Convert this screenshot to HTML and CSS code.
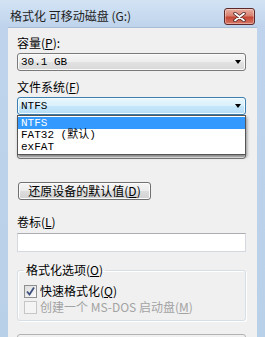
FILE: index.html
```html
<!DOCTYPE html>
<html lang="zh-CN">
<head>
  <meta charset="UTF-8" />
  <title>格式化 可移动磁盘 (G:)</title>
  <link rel="stylesheet" href="styles.css">
</head>
<body>

  <div class="window">
    <div class="titlebar">
      <span class="title">格式化 可移动磁盘 (G:)</span>
      <span class="close">
        <svg width="13" height="10" viewBox="0 0 13 10">
          <path d="M2 1.5 L11 8.5 M11 1.5 L2 8.5" stroke="#4a2020" stroke-width="3.4" stroke-linecap="round"/>
          <path d="M2 1.5 L11 8.5 M11 1.5 L2 8.5" stroke="#fff" stroke-width="1.8" stroke-linecap="round"/>
        </svg>
      </span>
    </div>

    <div class="client">
      <div class="label">容量(<u>P</u>):</div>
      <div class="combo"><span class="lat">30.1 GB</span><i class="arrow"></i></div>

      <div class="label">文件系统(<u>F</u>)</div>
      <div class="drop">
        <div class="combo focus"><span class="lat">NTFS</span><i class="arrow"></i></div>
        <ul class="list">
          <li class="sel">NTFS</li>
          <li>FAT32 (默认)</li>
          <li>exFAT</li>
        </ul>
      </div>

      <!-- covered by the open list -->
      <div class="label covered">分配单元大小(<u>A</u>)</div>
      <div class="combo"><span class="lat covered">4096 字节</span><i class="arrow"></i></div>

      <button class="btn">还原设备的默认值(<u>D</u>)</button>

      <div class="label volume">卷标(<u>L</u>)</div>
      <div class="field"></div>

      <fieldset class="group">
        <legend>格式化选项(<u>O</u>)</legend>
        <div class="check">
          <span class="box">
            <svg width="11" height="11" viewBox="0 0 11 11">
              <path d="M2 5.5 L4.5 8.5 L9 1.5" fill="none" stroke="#3b4f7c" stroke-width="1.8"/>
            </svg>
          </span>
          快速格式化(<u>Q</u>)
        </div>
        <div class="check off">
          <span class="box"></span>
          创建一个 MS-DOS 启动盘(<u>M</u>)
        </div>
      </fieldset>

      <div class="progress"></div>
    </div>
  </div>

</body>
</html>
```

FILE: styles.css
```css
* {
  box-sizing: border-box;
  margin: 0;
  padding: 0;
}

body {
  background: #bcd2ea;
  font-family: "Noto Sans CJK SC", sans-serif;
  font-size: 12px;
  color: #000;
}

u {
  text-decoration: underline;
}

.window {
  width: 265px;
  height: 337px;
  overflow: hidden;
  padding: 0 8px;
  background: linear-gradient(#d3e3f4, #bfd4ec 26px, #b9d0e9);
}

.titlebar {
  height: 27px;
  display: flex;
  align-items: flex-start;
  justify-content: space-between;
  padding-top: 8px;
}

.title {
  padding-left: 2px;
  line-height: 16px;
  color: #222;
}

.close {
  width: 31px;
  height: 17px;
  margin-right: 2px;
  border: 1px solid #5c2828;
  border-radius: 3px;
  background: linear-gradient(#eab0a2, #d8806f 45%, #c54634 55%, #d77866);
  box-shadow: inset 0 0 0 1px rgba(255,255,255,0.35);
  display: flex;
  align-items: center;
  justify-content: center;
}

.client {
  height: 310px;
  background: #f0f0f0;
  border-top: 1px solid #a9bdd4;
  padding: 7px 11px 0 9px;
}

.label {
  line-height: 16px;
  margin-bottom: 2px;
}

.combo + .label,
.drop + .label {
  margin-top: 8px;
}

.covered {
  visibility: hidden;
}

.lat {
  font-family: "Liberation Mono", "Noto Sans CJK SC", monospace;
  font-size: 11px;
}

.combo {
  height: 18px;
  display: flex;
  align-items: center;
  padding: 0 4px 0 3px;
  border: 1px solid #7a7a7a;
  border-radius: 3px;
  background: linear-gradient(#f6f6f6, #ededed 50%, #e2e2e2 50%, #d8d8d8);
  box-shadow: inset 0 0 0 1px #fafafa;
}

.combo.focus {
  border-color: #3c7fb1;
  background: linear-gradient(#eaf6fd, #d9f0fc 50%, #c6e7fb 50%, #b5ddf6);
  box-shadow: inset 0 0 0 1px #f4fbff;
}

.arrow {
  margin-left: auto;
  border-left: 3.5px solid transparent;
  border-right: 3.5px solid transparent;
  border-top: 4px solid #000;
}

.drop {
  position: relative;
}

.list {
  position: absolute;
  top: 100%;
  left: 0;
  right: 0;
  z-index: 2;
  list-style: none;
  background: #fff;
  border: 1px solid #555;
  padding: 1px 0;
  box-shadow: 1px 2px 3px rgba(0,0,0,0.4);
  font-family: "Liberation Mono", "Noto Sans CJK SC", monospace;
  font-size: 11px;
}

.list li {
  line-height: 12px;
  height: 12px;
  padding-left: 3px;
}

.list li.sel {
  background: #3399ff;
  color: #fff;
}

.btn {
  display: block;
  margin: 23px 0 0 1px;
  width: 133px;
  height: 18px;
  font-family: inherit;
  font-size: 12px;
  line-height: 14px;
  color: #000;
  border: 1px solid #707070;
  border-radius: 3px;
  background: linear-gradient(#f4f4f4, #ececec 50%, #dedede 50%, #d2d2d2);
  box-shadow: inset 0 0 0 1px #fcfcfc;
}

.label.volume {
  margin-top: 14px;
  margin-bottom: 3px;
}

.field {
  height: 19px;
  background: #fff;
  border: 1px solid #d4d9df;
  border-top-color: #abadb3;
}

.group {
  margin-top: 10px;
  min-width: 0;
  border: 1px solid #d5dfe5;
  border-radius: 3px;
  padding: 0 6px 5px;
  box-shadow: inset 1px 1px 0 #fff, 1px 1px 0 #fff;
}

.group legend {
  padding: 0 2px;
  line-height: 16px;
}

.check {
  display: flex;
  align-items: center;
  line-height: 16px;
}

.group legend + .check {
  margin-top: 5px;
}

.box {
  width: 13px;
  height: 13px;
  margin-right: 3px;
  border: 1px solid #8e8f8f;
  background: linear-gradient(135deg, #dcdcdc, #fbfbfb);
  display: flex;
  align-items: center;
  justify-content: center;
}

.check.off {
  color: #a3a3a3;
}

.check.off .box {
  border-color: #c6c6c6;
  background: #f4f4f4;
}

.progress {
  margin-top: 13px;
  height: 15px;
  border: 1px solid #b2b2b2;
  border-radius: 3px;
  background: linear-gradient(#f2f2f2, #e2e2e2);
}
```
